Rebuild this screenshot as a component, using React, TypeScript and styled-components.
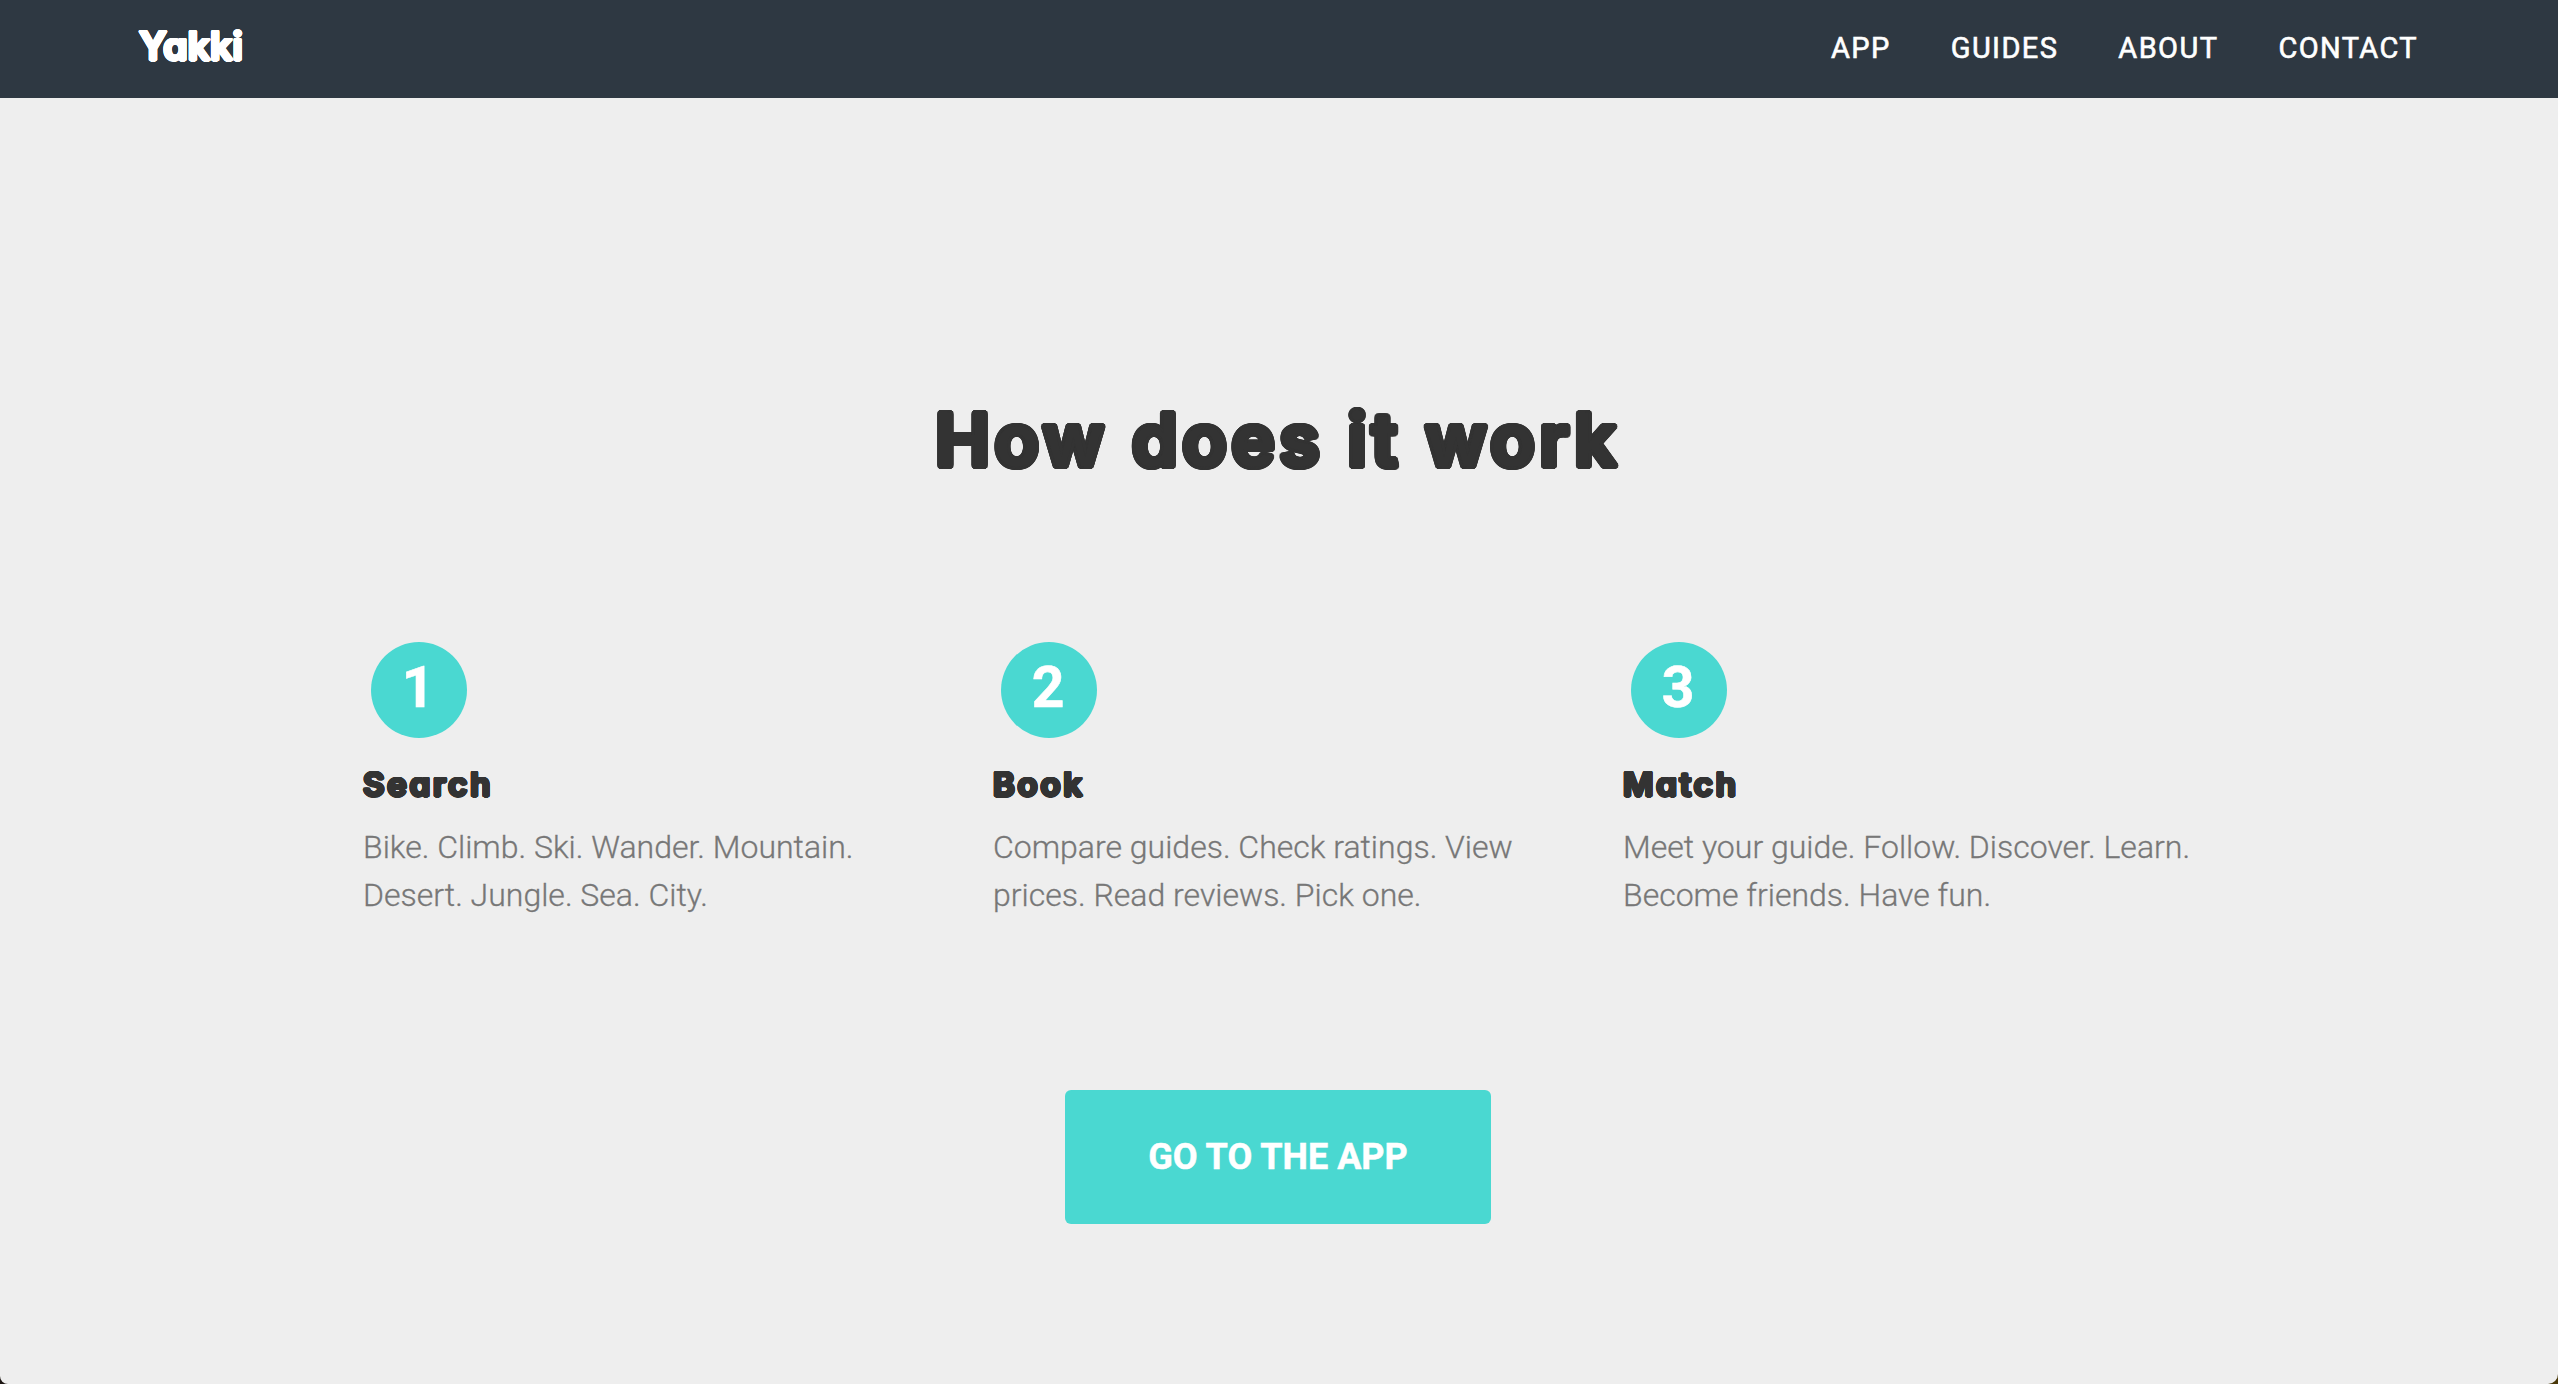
import styled, { createGlobalStyle } from "styled-components";

const colors = {
  dark: "#2e3842",
  page: "#eeeeee",
  heading: "#333333",
  text: "#777777",
  accent: "#4ad8d1",
};

const steps = [
  {
    title: "Search",
    text: "Bike. Climb. Ski. Wander. Mountain. Desert. Jungle. Sea. City.",
  },
  {
    title: "Book",
    text: "Compare guides. Check ratings. View prices. Read reviews. Pick one.",
  },
  {
    title: "Match",
    text: "Meet your guide. Follow. Discover. Learn. Become friends. Have fun.",
  },
];

const links = ["App", "Guides", "About", "Contact"];

// ring of shadows around the glyphs, gives the display font its round ends
const roundEnds = (radius: number) =>
  Array.from({ length: 24 }, (_, i) => {
    const angle = (i / 24) * Math.PI * 2;
    const x = (Math.cos(angle) * radius).toFixed(2);
    const y = (Math.sin(angle) * radius).toFixed(2);
    return `${x}px ${y}px 0 currentColor`;
  }).join(", ");

const App = () => {
  return (
    <>
      <GlobalStyle />
      <Page>
        <Navbar>
          <Brand href="#">Yakki</Brand>
          <NavLinks>
            {links.map((link) => (
              <NavLink key={link} href="#">
                {link}
              </NavLink>
            ))}
          </NavLinks>
        </Navbar>
        <Section>
          <Title>How does it work</Title>
          <Steps>
            {steps.map((step, key) => (
              <Step key={step.title}>
                <StepNumber>{key + 1}</StepNumber>
                <StepTitle>{step.title}</StepTitle>
                <StepText>{step.text}</StepText>
              </Step>
            ))}
          </Steps>
          <Button href="#">Go to the app</Button>
        </Section>
      </Page>
    </>
  );
};

export default App;

const GlobalStyle = createGlobalStyle`
  * {
    box-sizing: border-box;
  }
  html {
    background: linear-gradient(90deg, #1d1613 50%, #4a3808 50%);
  }
  body {
    margin: 0;
    font-family: Roboto, "Liberation Sans", sans-serif;
  }
  h1, h2, p {
    margin: 0;
  }
  a {
    text-decoration: none;
  }
`;

const Page = styled.div`
  display: flex;
  flex-direction: column;
  height: 1384px;
  overflow: hidden;
  background: ${colors.page};
  border-radius: 0 0 10px 8px;
`;

const Navbar = styled.nav`
  display: flex;
  justify-content: space-between;
  flex: none;
  height: 98px;
  padding: 0 140px 0 139px;
  background: ${colors.dark};
  color: #fff;
`;

const Brand = styled.a`
  font-family: Inter, sans-serif;
  font-feature-settings: "cv11";
  font-size: 39px;
  font-weight: 600;
  line-height: 92px;
  letter-spacing: 0.2px;
  color: #fff;
  text-shadow: ${roundEnds(1.5)};
`;

const NavLinks = styled.div`
  display: flex;
  gap: 60px;
`;

const NavLink = styled.a`
  font-size: 29px;
  font-weight: 400;
  line-height: 96px;
  letter-spacing: 1.4px;
  text-transform: uppercase;
  color: #fff;
  -webkit-text-stroke: 0.6px currentColor;
`;

const Section = styled.section`
  display: flex;
  flex-direction: column;
  align-items: center;
  padding: 290px 2px 0 0;
`;

const Title = styled.h1`
  font-family: Inter, sans-serif;
  font-feature-settings: "cv11";
  font-size: 73px;
  font-weight: 600;
  line-height: 104px;
  letter-spacing: 4.8px;
  color: ${colors.heading};
  text-shadow: ${roundEnds(3.3)}, ${roundEnds(1.6)};
`;

const Steps = styled.div`
  display: grid;
  grid-template-columns: repeat(3, 570px);
  column-gap: 60px;
  width: 1830px;
  margin-top: 150px;
`;

const Step = styled.div`
  display: flex;
  flex-direction: column;
  align-items: flex-start;
`;

const StepNumber = styled.div`
  width: 96px;
  height: 96px;
  margin-left: 8px;
  padding-right: 2px;
  border-radius: 50%;
  background: ${colors.accent};
  color: #fff;
  font-size: 57px;
  font-weight: 700;
  line-height: 92px;
  text-align: center;
  -webkit-text-stroke: 0.6px currentColor;
`;

const StepTitle = styled.h2`
  margin-top: 21px;
  font-family: Inter, sans-serif;
  font-feature-settings: "cv11";
  font-size: 33px;
  font-weight: 600;
  line-height: 50px;
  letter-spacing: 2.8px;
  color: ${colors.heading};
  text-shadow: ${roundEnds(1.5)};
`;

const StepText = styled.p`
  margin-top: 14px;
  font-size: 32px;
  font-weight: 300;
  line-height: 48px;
  color: ${colors.text};
  -webkit-text-stroke: 0.3px currentColor;
`;

const Button = styled.a`
  width: 426px;
  height: 134px;
  margin-top: 171px;
  border-radius: 6px;
  background: ${colors.accent};
  color: #fff;
  font-size: 36px;
  font-weight: 700;
  line-height: 134px;
  text-align: center;
  text-transform: uppercase;
  -webkit-text-stroke: 0.5px currentColor;
`;
